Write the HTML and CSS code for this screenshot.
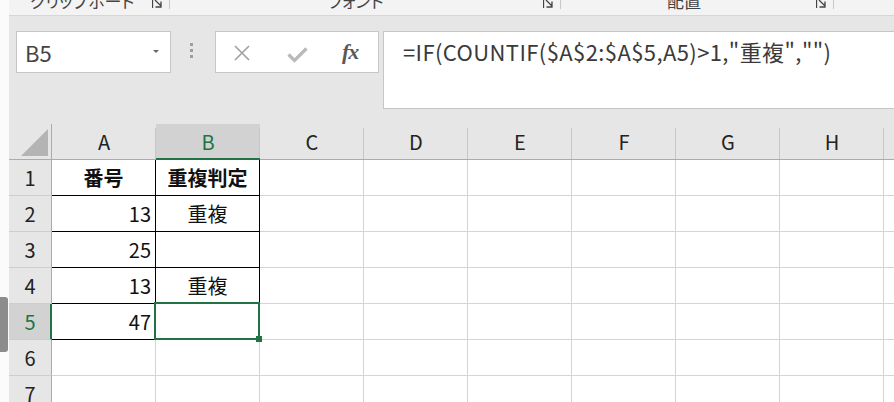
FILE: index.html
```html
<!DOCTYPE html>
<html lang="ja">
<head>
<meta charset="utf-8">
<link rel="stylesheet" href="styles.css">
</head>
<body>
<div class="edgebar"></div>
<div class="main">
  <div class="ribbon">
    <div class="grp g1"><span class="lbl">クリップボード</span><svg class="launch" width="11" height="10" viewBox="0 0 11 10"><path d="M0.5 0 V9 M3 1 L9 7 M9 2.5 V8 H3.5" fill="none" stroke="#444" stroke-width="1.3"/></svg></div>
    <div class="grp g2"><span class="lbl">フォント</span><svg class="launch" width="11" height="10" viewBox="0 0 11 10"><path d="M0.5 0 V9 M3 1 L9 7 M9 2.5 V8 H3.5" fill="none" stroke="#444" stroke-width="1.3"/></svg></div>
    <div class="grp g3"><span class="lbl">配置</span><svg class="launch" width="11" height="10" viewBox="0 0 11 10"><path d="M0.5 0 V9 M3 1 L9 7 M9 2.5 V8 H3.5" fill="none" stroke="#444" stroke-width="1.3"/></svg></div>
  </div>
  <div class="fbar">
    <div class="namebox"><span class="ref">B5</span><span class="caret"></span></div>
    <div class="dots"><i></i><i></i><i></i></div>
    <div class="btns">
      <svg class="x" width="18" height="18" viewBox="0 0 18 18"><path d="M2 2 L16 16 M16 2 L2 16" stroke="#a3a3a3" stroke-width="1.7" fill="none"/></svg>
      <svg class="ok" width="21" height="16" viewBox="0 0 21 16"><path d="M1.5 7.5 L7.5 13.5 L19.5 1.5" stroke="#b9b9b9" stroke-width="3.2" fill="none"/></svg>
      <span class="fx">fx</span>
    </div>
    <div class="formula">=IF(COUNTIF($A$2:$A$5,A5)&gt;1,"重複","")</div>
  </div>
  <div class="sheet">
    <div class="corner"><svg width="30" height="30" viewBox="0 0 30 30"><polygon points="1,28 28,28 28,1" fill="#b4b4b4"/></svg></div>
    <div class="ch">A</div><div class="ch sel">B</div><div class="ch">C</div><div class="ch">D</div><div class="ch">E</div><div class="ch">F</div><div class="ch">G</div><div class="ch">H</div><div class="ch last"></div>

    <div class="rh">1</div><div class="c bk ctr b">番号</div><div class="c bk ctr b">重複判定</div><div class="c"></div><div class="c"></div><div class="c"></div><div class="c"></div><div class="c"></div><div class="c"></div><div class="c"></div>

    <div class="rh">2</div><div class="c bk num">13</div><div class="c bk ctr">重複</div><div class="c"></div><div class="c"></div><div class="c"></div><div class="c"></div><div class="c"></div><div class="c"></div><div class="c"></div>

    <div class="rh">3</div><div class="c bk num">25</div><div class="c bk ctr"></div><div class="c"></div><div class="c"></div><div class="c"></div><div class="c"></div><div class="c"></div><div class="c"></div><div class="c"></div>

    <div class="rh">4</div><div class="c bk num">13</div><div class="c bk ctr">重複</div><div class="c"></div><div class="c"></div><div class="c"></div><div class="c"></div><div class="c"></div><div class="c"></div><div class="c"></div>

    <div class="rh sel">5</div><div class="c bk num">47</div><div class="c bk ctr active"></div><div class="c"></div><div class="c"></div><div class="c"></div><div class="c"></div><div class="c"></div><div class="c"></div><div class="c"></div>

    <div class="rh">6</div><div class="c"></div><div class="c"></div><div class="c"></div><div class="c"></div><div class="c"></div><div class="c"></div><div class="c"></div><div class="c"></div><div class="c"></div>

    <div class="rh">7</div><div class="c"></div><div class="c"></div><div class="c"></div><div class="c"></div><div class="c"></div><div class="c"></div><div class="c"></div><div class="c"></div><div class="c"></div>
  </div>
</div>
</body>
</html>
```
FILE: styles.css
```css
html, body {
  margin: 0;
  padding: 0;
  width: 894px;
  height: 402px;
  overflow: hidden;
  background: #fbfbfb;
  font-family: "Noto Sans CJK JP", "Noto Sans", sans-serif;
}
body { position: relative; }
.edgebar {
  position: absolute;
  left: 0;
  top: 297px;
  width: 8px;
  height: 55px;
  background: #8c8c8c;
  border-radius: 0 3px 3px 0;
  z-index: 5;
}
.main {
  margin-left: 9px;
  width: 885px;
}
/* ribbon */
.ribbon {
  height: 15px;
  background: #f3f3f3;
  border-bottom: 1px solid #d6d6d6;
  display: flex;
  overflow: hidden;
}
.grp {
  display: flex;
  align-items: flex-start;
  box-sizing: border-box;
  border-right: 1px solid #c8c8c8;
  height: 9px;
}
.lbl {
  font-size: 17px;
  line-height: 17px;
  margin-top: -8px;
  color: #444;
  font-feature-settings: "palt";
  white-space: nowrap;
}
.launch { margin-left: auto; margin-right: 6px; margin-top: -1px; }
.g1 { width: 161px; padding-left: 21px; }
.g2 { width: 391px; padding-left: 158px; }
.g3 { width: 273px; padding-left: 106px; }

/* formula bar area */
.fbar {
  height: 108px;
  box-sizing: border-box;
  padding: 15px 0 0 7px;
  background: #e6e6e6;
  display: flex;
  align-items: flex-start;
}
.namebox {
  width: 155px;
  height: 42px;
  box-sizing: border-box;
  background: #fff;
  border: 1px solid #c6c6c6;
  display: flex;
  align-items: center;
  padding-left: 8px;
}
.ref {
  font-size: 22px;
  color: #444;
  line-height: 22px;
}
.caret {
  margin-left: auto;
  margin-right: 11px;
  width: 0;
  height: 0;
  border-left: 3px solid transparent;
  border-right: 3px solid transparent;
  border-top: 3px solid #666;
  margin-top: -2px;
}
.dots {
  margin-left: 19px;
  margin-top: 12px;
  display: flex;
  flex-direction: column;
  gap: 3px;
}
.dots i {
  display: block;
  width: 3px;
  height: 3px;
  background: #9e9e9e;
}
.btns {
  margin-left: 22px;
  width: 164px;
  height: 42px;
  box-sizing: border-box;
  background: #fff;
  border: 1px solid #c6c6c6;
  display: flex;
  align-items: center;
  padding-left: 17px;
}
.btns .x { margin-top: 2px; }
.btns .ok { margin-left: 36px; margin-top: 6px; }
.fx {
  margin-left: 34px;
  font-family: "Liberation Serif", serif;
  font-style: italic;
  font-weight: bold;
  font-size: 22px;
  color: #595959;
  letter-spacing: -1px;
  line-height: 22px;
}
.formula {
  margin-left: 4px;
  flex: 1;
  height: 78px;
  box-sizing: border-box;
  background: #fff;
  border: 1px solid #c6c6c6;
  border-right: none;
  padding-left: 19px;
  font-size: 22px;
  letter-spacing: 0.4px;
  line-height: 38px;
  color: #3a3a3a;
  white-space: nowrap;
}

/* sheet */
.sheet {
  display: grid;
  grid-template-columns: 43px repeat(8, 104px) 11px;
  grid-auto-rows: 36px;
  background: #fff;
}
.sheet > div {
  box-sizing: border-box;
  display: flex;
  align-items: center;
  font-size: 20px;
  color: #111;
}
.corner {
  background: #e6e6e6;
  border-right: 1px solid #ababab;
  border-bottom: 1px solid #ababab;
  justify-content: flex-end;
  align-items: flex-end !important;
}
.corner svg { display: block; margin-right: 1px; margin-bottom: 1px; }
.ch {
  background: #e6e6e6 linear-gradient(#c6c6c6, #c6c6c6) no-repeat right bottom / 1px calc(100% - 4px);
  border-bottom: 1px solid #ababab;
  justify-content: center;
  color: #222 !important;
}
.ch.last { background: #e6e6e6; }
.ch.sel {
  background-color: #d2d2d2;
  border-bottom: 2px solid #217346;
  color: #217346 !important;
  padding-top: 1px;
}
.rh {
  background: #e6e6e6;
  border-right: 1px solid #ababab;
  border-bottom: 1px solid #cdcdcd;
  justify-content: center;
  color: #222 !important;
}
.rh.sel {
  background: #d2d2d2;
  border-right: 2px solid #217346;
  color: #217346 !important;
  padding-left: 1px;
}
.c {
  border-right: 1px solid #d4d4d4;
  border-bottom: 1px solid #d4d4d4;
}
.c.bk {
  border-right-color: #000;
  border-bottom-color: #000;
}
.ctr { justify-content: center; }
.num { justify-content: flex-end; padding-right: 4px; }
.b { font-weight: bold; }
.active { position: relative; }
.active::after {
  content: "";
  position: absolute;
  left: -2px;
  top: -2px;
  right: -1px;
  bottom: -1px;
  border: 2px solid #217346;
  z-index: 2;
}
.active::before {
  content: "";
  position: absolute;
  right: -3px;
  bottom: -3px;
  width: 6px;
  height: 6px;
  background: #217346;
  z-index: 3;
}
```
